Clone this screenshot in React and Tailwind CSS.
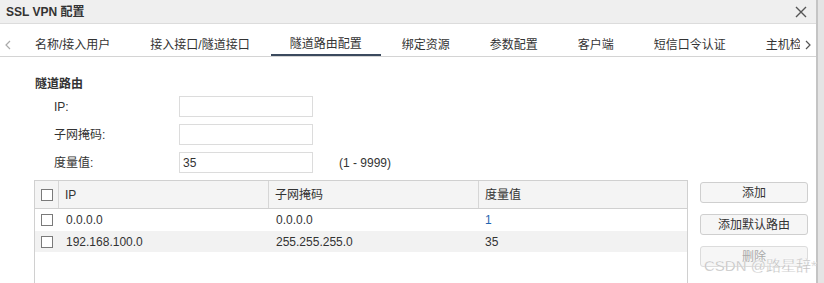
import React from "react";

const tabs = [
  "名称/接入用户",
  "接入接口/隧道接口",
  "隧道路由配置",
  "绑定资源",
  "参数配置",
  "客户端",
  "短信口令认证",
  "主机检查",
];

const rows = [
  { ip: "0.0.0.0", mask: "0.0.0.0", metric: "1", blue: true },
  { ip: "192.168.100.0", mask: "255.255.255.0", metric: "35" },
];

function Box() {
  return <span className="block w-[12px] h-[12px] border border-[#7a7a7a] bg-white" />;
}

export default function App() {
  return (
    <div className="relative flex w-[824px] h-[283px] overflow-hidden bg-white text-[12px] text-[#333] font-['Liberation_Sans','Noto_Sans_CJK_SC',sans-serif]">
      <div className="flex flex-col w-[816px] min-w-0">
        {/* title bar */}
        <div className="shrink-0 flex items-center justify-between h-[24px] px-[6px] bg-[#efefef] border-b border-[#dcdcdc]">
          <span className="font-bold text-[12px] text-[#333]">SSL VPN 配置</span>
          <svg width="12" height="12" viewBox="0 0 12 12" className="mr-[3px]">
            <path d="M1 1L11 11M11 1L1 11" stroke="#555" strokeWidth="1.4" />
          </svg>
        </div>

        {/* tabs */}
        <div className="shrink-0 flex h-[33px] border-b border-[#d4d4d4]">
          <div className="w-[16px] flex items-center justify-center pt-[9px]">
            <svg width="6" height="10" viewBox="0 0 6 10">
              <path d="M5 1L1 5L5 9" stroke="#aaa" strokeWidth="1.2" fill="none" />
            </svg>
          </div>
          <div className="flex-1 flex gap-[2px] overflow-hidden min-w-0">
            {tabs.map((t) => (
              <div
                key={t}
                className={
                  t === "隧道路由配置"
                    ? "shrink-0 flex items-center px-[19px] pt-[9px] border-b-2 border-[#3b4a5e] whitespace-nowrap"
                    : "shrink-0 flex items-center px-[19px] pt-[9px] whitespace-nowrap"
                }
              >
                {t}
              </div>
            ))}
          </div>
          <div className="w-[16px] flex items-center justify-center pt-[9px]">
            <svg width="6" height="10" viewBox="0 0 6 10">
              <path d="M1 1L5 5L1 9" stroke="#555" strokeWidth="1.2" fill="none" />
            </svg>
          </div>
        </div>

        {/* form */}
        <div className="shrink-0 pl-[34px] pt-[19px]">
          <div className="font-bold leading-[16px] pl-[1px]">隧道路由</div>
          <div className="flex flex-col gap-[7px] mt-[4px]">
            {[
              ["IP:", ""],
              ["子网掩码:", ""],
              ["度量值:", "35"],
            ].map(([label, val], i) => (
              <div key={label} className="flex items-center h-[21px]">
                <span className="w-[145px] pl-[20px]">{label}</span>
                <div className="w-[134px] h-[21px] border border-[#dcdcdc] px-[3px] flex items-center">
                  {val}
                </div>
                {i === 2 && <span className="ml-[26px]">(1 - 9999)</span>}
              </div>
            ))}
          </div>

          {/* table + buttons */}
          <div className="flex mt-[7px]">
            <div className="w-[654px] h-[120px] border border-[#d0d0d0] border-b-0">
              <div className="flex h-[28px] bg-[#f4f4f4] border-b border-[#d0d0d0]">
                <div className="w-[24px] flex items-center justify-center border-r border-[#d6d6d6]">
                  <Box />
                </div>
                <div className="w-[210px] flex items-center pl-[6px] border-r border-[#d6d6d6]">IP</div>
                <div className="w-[210px] flex items-center pl-[6px] border-r border-[#d6d6d6]">子网掩码</div>
                <div className="flex-1 flex items-center pl-[6px]">度量值</div>
              </div>
              {rows.map((r, i) => (
                <div
                  key={r.ip}
                  className={i % 2 ? "flex h-[21px] bg-[#f2f2f2]" : "flex h-[22px] bg-white"}
                >
                  <div className="w-[24px] flex items-center justify-center">
                    <Box />
                  </div>
                  <div className="w-[210px] flex items-center pl-[7px]">{r.ip}</div>
                  <div className="w-[210px] flex items-center pl-[7px]">{r.mask}</div>
                  <div className={r.blue ? "flex-1 flex items-center pl-[6px] text-[#1f65b0]" : "flex-1 flex items-center pl-[6px]"}>
                    {r.metric}
                  </div>
                </div>
              ))}
            </div>

            <div className="flex flex-col gap-[11px] ml-[12px] pt-[2px]">
              <button className="w-[108px] h-[21px] rounded-[3px] border border-[#cfcfcf] bg-[#f6f6f6] text-[#333]">添加</button>
              <button className="w-[108px] h-[21px] rounded-[3px] border border-[#cfcfcf] bg-[#f6f6f6] text-[#333]">添加默认路由</button>
              <button className="w-[108px] h-[21px] rounded-[3px] border border-[#dcdcdc] bg-[#f6f6f6] text-[#aaa]">删除</button>
            </div>
          </div>
        </div>
      </div>
      <div className="flex-1 border-l-2 border-[#c4c4c4] bg-[#e4e4e4]" />

      {/* watermark */}
      <div className="absolute left-[704px] top-[258px] text-[15px] leading-[16px] text-[#bbbbbb] whitespace-nowrap [-webkit-text-stroke:0.3px_#ffffff]">
        CSDN @路星辞*
      </div>
    </div>
  );
}
